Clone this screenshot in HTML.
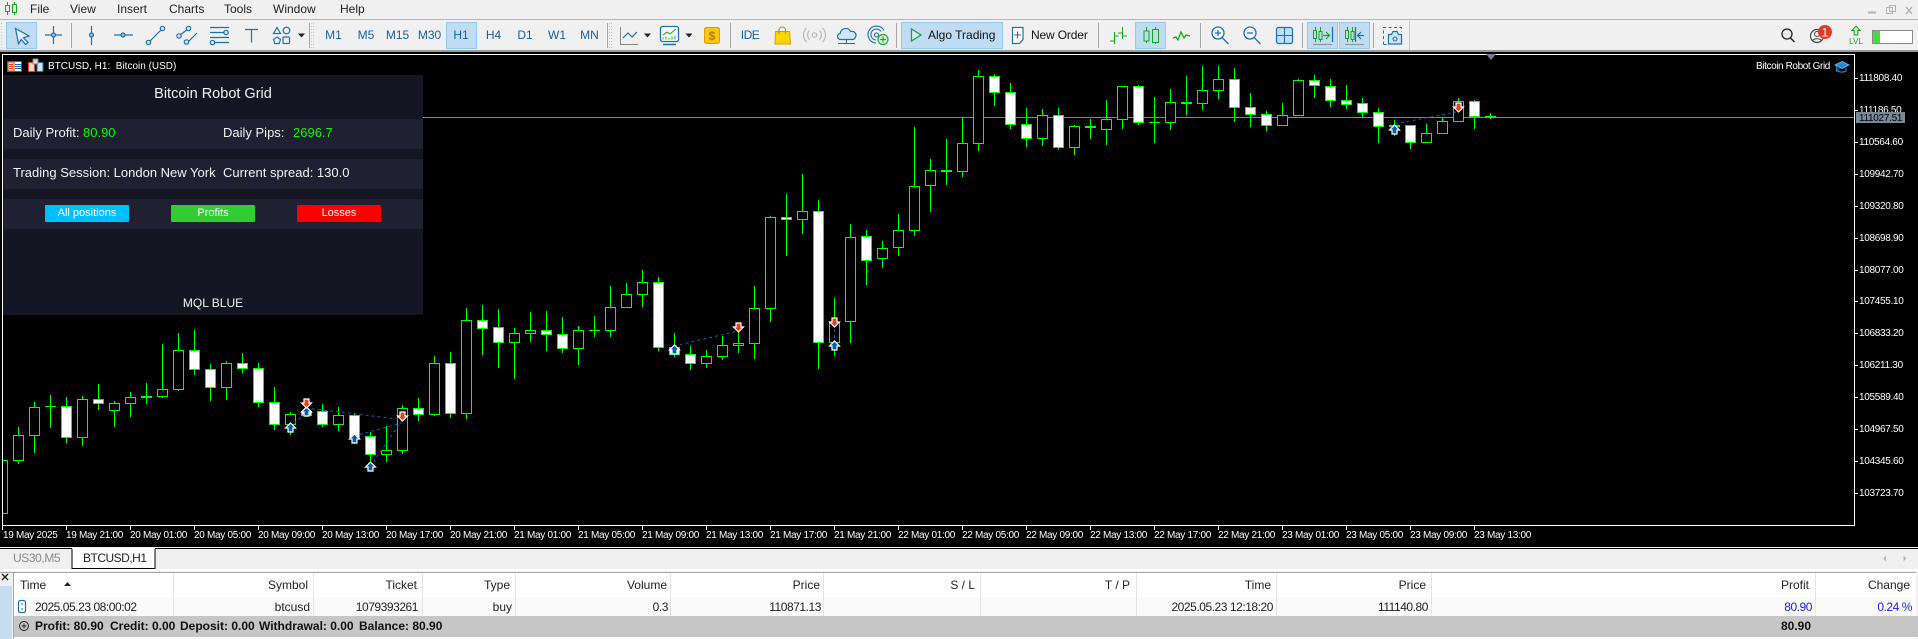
<!DOCTYPE html>
<html>
<head>
<meta charset="utf-8">
<style>
html,body{margin:0;padding:0;background:#f0f0f0}
#p{position:relative;width:1918px;height:639px;overflow:hidden;font-family:"Liberation Sans",sans-serif;background:#f0f0f0}
.a{position:absolute}
.t{position:absolute;white-space:pre;line-height:14px;height:14px;font-size:12px;color:#111}
.c{transform:translateX(-50%)}
.m{color:#222}
.f{color:#17609c}
.y{font-size:10px;letter-spacing:-.3px;color:#fff}
.x{font-size:10px;letter-spacing:-.3px;color:#fff;top:529px}
.h{color:#222;top:578px}
.d{color:#222;top:600px;letter-spacing:-.45px}
.s{font-weight:bold;color:#111;top:619px}
.w{color:#f2f2f2;font-size:13px}
.b{text-align:center;font-size:11px;color:#fff;line-height:17px;height:17px;top:205px;width:84px;border-radius:1px}
svg{position:absolute;left:0;top:0}
</style>
</head>
<body>
<div id="p">
<div class="a" style="left:0;top:19px;width:1918px;height:1px;background:#b4b4b4"></div>
<div class="a" style="left:0;top:50px;width:1918px;height:2px;background:#9a9a9a"></div>
<div class="a" style="left:0;top:52px;width:1918px;height:495px;background:#000"></div>
<div class="a" style="left:6px;top:22px;width:29px;height:25px;background:#c0dcf3;border:1px solid #90c8f6"></div>
<div class="a" style="left:446px;top:22px;width:29px;height:25px;background:#c0dcf3;border:1px solid #90c8f6"></div>
<div class="a" style="left:901px;top:22px;width:100px;height:25px;background:#c0dcf3;border:1px solid #90c8f6"></div>
<div class="a" style="left:1135px;top:22px;width:29px;height:25px;background:#c0dcf3;border:1px solid #90c8f6"></div>
<div class="a" style="left:1307px;top:22px;width:29px;height:25px;background:#c0dcf3;border:1px solid #90c8f6"></div>
<div class="a" style="left:1339px;top:22px;width:29px;height:25px;background:#c0dcf3;border:1px solid #90c8f6"></div>

<div class="t m" style="left:30px;top:2px">File</div>
<div class="t m" style="left:70px;top:2px">View</div>
<div class="t m" style="left:117px;top:2px">Insert</div>
<div class="t m" style="left:169px;top:2px">Charts</div>
<div class="t m" style="left:224px;top:2px">Tools</div>
<div class="t m" style="left:273px;top:2px">Window</div>
<div class="t m" style="left:340px;top:2px">Help</div>

<div class="t f c" style="left:333.5px;top:28px">M1</div>
<div class="t f c" style="left:366px;top:28px">M5</div>
<div class="t f c" style="left:397.5px;top:28px">M15</div>
<div class="t f c" style="left:429.5px;top:28px">M30</div>
<div class="t f c" style="left:461px;top:28px">H1</div>
<div class="t f c" style="left:493.5px;top:28px">H4</div>
<div class="t f c" style="left:525px;top:28px">D1</div>
<div class="t f c" style="left:557px;top:28px">W1</div>
<div class="t f c" style="left:589.5px;top:28px">MN</div>
<div class="t f c" style="left:750px;top:28px;letter-spacing:-.5px">IDE</div>
<div class="t" style="left:928px;top:28px">Algo Trading</div>
<div class="t" style="left:1031px;top:28px;letter-spacing:-.15px">New Order</div>

<svg width="1918" height="639" viewBox="0 0 1918 639" fill="none">
<!-- app icon -->
<g stroke="#19a51e"><path d="M7.5 2v13M14.5 2v13"/><rect x="5.5" y="5.5" width="4" height="6" fill="#f0f0f0"/><rect x="12.5" y="4.5" width="4" height="8" fill="#f0f0f0"/></g>
<!-- separators -->
<g stroke="#a6a6a6" shape-rendering="crispEdges"><path d="M71.5 23v25M730.5 23v25M896.5 23v25M1098.5 23v25M1200.5 23v25M1302.5 23v25M1373.5 23v25M607.5 23v25M309.5 23v25"/></g>
<path d="M1409.5 21v29" stroke="#c8c8c8" shape-rendering="crispEdges"/>
<g stroke="#c4c4c4" stroke-dasharray="1 2"><path d="M1.5 23v25M311.5 23v25M313.5 23v25M609.5 23v25M611.5 23v25"/></g>
<!-- tools -->
<g stroke="#1f70ad" stroke-width="1.2" fill="none">
<path d="M15.5 28.5L29 36l-5.5 1.8L28 42.5l-2.4 2-4.3-5-2.8 4.3z" fill="#e2eef8"/>
<path d="M53.5 26v18M45 35h17"/><circle cx="53.5" cy="35" r="2" fill="#8fc4ea"/>
<path d="M91.5 26v19"/><circle cx="91.5" cy="35" r="2" fill="#8fc4ea"/>
<path d="M114 35h19"/><circle cx="123" cy="35" r="2" fill="#8fc4ea"/>
<path d="M150 41l11-11"/><circle cx="148.5" cy="42.5" r="2.2" fill="#cfe4f5"/><circle cx="162.5" cy="28.5" r="2.2" fill="#cfe4f5"/>
<path d="M180 35l8-6M188 42l9-9"/><circle cx="179" cy="36" r="2.2" fill="#cfe4f5"/><circle cx="188.5" cy="28.5" r="2.2" fill="#cfe4f5"/><circle cx="186.5" cy="42" r="2.2" fill="#cfe4f5"/>
<path d="M210 27.5h19M210 32.5h14M210 37.5h19M215 42.5h14"/><circle cx="226" cy="32.5" r="2.2" fill="#cfe4f5"/><circle cx="212.5" cy="42.5" r="2.2" fill="#cfe4f5"/>
<path d="M245 29.5h13M251.5 29.5v13"/>
<path d="M277 27.5l3.5 6h-7z"/><circle cx="286.5" cy="30.5" r="3.3"/><path d="M277 37l3.5 2.5-1.3 4h-4.4l-1.3-4z"/><rect x="283" y="37" width="6.5" height="6.5" rx="1"/>
</g>
<path d="M298 33.5h7l-3.5 4z" fill="#222"/>
<!-- chart shift icon -->
<path d="M620.5 27v17.5H638" stroke="#888" stroke-width="1"/>
<path d="M623 38l5-5 4 4 5-5" stroke="#1f70ad" stroke-width="1.2"/>
<path d="M644 33.5h7l-3.5 4z" fill="#222"/>
<!-- template -->
<rect x="660.5" y="26.5" width="18" height="15" rx="2" stroke="#1f70ad" stroke-width="1.3" fill="#fff"/>
<path d="M663 44.5h13" stroke="#1f70ad" stroke-width="1.5"/>
<path d="M663 35l4-3 3 2 6-5" stroke="#25a53a" stroke-width="1.1"/>
<path d="M663 39.5v-2M666 39.5v-3M669 39.5v-2M672 39.5v-3M675 39.5v-4" stroke="#25a53a"/>
<path d="M685.5 33.5h7l-3.5 4z" fill="#222"/>
<!-- dollar -->
<rect x="704.5" y="27.5" width="15" height="16" rx="2" fill="#fbc512" stroke="#d39f10"/>
<text x="712" y="40" font-family="Liberation Sans" font-size="12" font-weight="bold" fill="#b07d10" text-anchor="middle">$</text>
<!-- bag -->
<path d="M775.5 31.5h14l1 12.5h-15.500z" fill="#ffd400" stroke="#d49f10"/>
<path d="M779 34v-4c0-4 6.500-4 6.500 0v4" stroke="#c08a10" stroke-width="1.1"/>
<!-- signal -->
<g stroke="#b8b8b8" stroke-width="1.2"><circle cx="814.500" cy="35" r="2.200"/><path d="M809.500 30.500c-2.500 2.500-2.500 6.500 0 9M819.500 30.500c2.500 2.500 2.500 6.500 0 9M806.500 28c-4 4-4 10 0 14M822.500 28c4 4 4 10 0 14"/></g>
<!-- cloud -->
<path d="M841 39.500c-4.500 0-4.500-5.500-.8-6 .6-5.500 8-7 10.300-2 4.500-1 6.500 3 5 5.500-.5 1.500-1.500 2.500-3 2.500z" fill="#cfe6f8" stroke="#1f70ad" stroke-width="1.2"/>
<path d="M846.500 39.500v3.500M838 43.500h17" stroke="#1f70ad" stroke-width="1.1"/>
<!-- globe plus -->
<g stroke="#1f70ad" stroke-width="1.1"><path d="M884 30.500a8.500 8.500 0 1 0-8 12.500"/><path d="M881 31.500a5.500 5.500 0 1 0-5 8.500"/><circle cx="876.500" cy="35" r="2"/></g>
<circle cx="883" cy="39.500" r="5" fill="#d8f3dc" stroke="#22a63a" stroke-width="1.200"/><path d="M883 36.500v6M880 39.500h6" stroke="#22a63a" stroke-width="1.200"/>
<!-- play -->
<path d="M911.500 29l9.500 6-9.500 6z" stroke="#1d9a45" stroke-width="1.300" fill="#d6ecf4"/>
<!-- new order -->
<path d="M1012.500 27.500h10.500v12l-3.500 4h-7z" fill="#fff" stroke="#1f70ad" stroke-width="1.200"/>
<path d="M1017.500 31.500v7M1014 35h7" stroke="#1f70ad" stroke-width="1.100"/>
<!-- chart types -->
<g stroke="#13a81c" stroke-width="1.200" shape-rendering="crispEdges">
<path d="M1114.500 32v12M1110 41h4.500M1114.500 36h4M1122.500 27v12M1118 33h4.500M1122.500 36h4.500"/>
<path d="M1146.500 27v16M1155.500 27v17"/>
<rect x="1144" y="31" width="5" height="10" fill="#c0dcf3"/><rect x="1152.500" y="29.500" width="6" height="13" fill="#c0dcf3"/>
</g>
<path d="M1173 38l3-1 2 3 3-8 3 6 2-3 4 1" stroke="#13a81c" stroke-width="1.300"/>
<!-- zoom -->
<g stroke="#1f70ad" stroke-width="1.300"><circle cx="1218" cy="33" r="6"/><path d="M1222.500 38l6 6M1215 33h6M1218 30v6"/><circle cx="1250" cy="33" r="6"/><path d="M1254.500 38l6 6M1247 33h6"/></g>
<rect x="1276.500" y="27.500" width="16" height="16" rx="2" fill="#bfe0fa" stroke="#1f70ad" stroke-width="1.200"/>
<path d="M1284.500 28v15M1277 35.500h15" stroke="#1f70ad" stroke-width="1.100"/>
<!-- autoscroll -->
<g stroke="#13a81c" shape-rendering="crispEdges"><path d="M1315.500 27v15M1320.500 27v15M1347.500 27v15M1352.500 27v15"/><rect x="1313.500" y="30.500" width="3" height="8" fill="#c0dcf3"/><rect x="1319" y="31.500" width="3" height="8" fill="#c0dcf3"/>
<rect x="1345.500" y="30.500" width="3" height="8" fill="#c0dcf3"/><rect x="1351" y="31.500" width="3" height="8" fill="#c0dcf3"/></g>
<path d="M1323 35.500h6M1326 32l3.500 3.500-3.500 3.500" stroke="#13a81c" stroke-width="1.200"/>
<path d="M1332.500 27v15" stroke="#1f70ad" stroke-width="1.300"/>
<path d="M1355.500 27v15" stroke="#1f70ad" stroke-width="1.300"/>
<path d="M1364 35.500h-6M1361 32l-3.500 3.500 3.500 3.500" stroke="#1f70ad" stroke-width="1.200"/>
<path d="M1313 44.500h19M1345 44.500h19" stroke="#8e9aa5" stroke-width="1.200"/>
<!-- camera -->
<path d="M1383.500 44.500v-17h18v4M1383.500 44.500h4" stroke="#1f70ad" stroke-dasharray="3 2.500"/>
<path d="M1388.500 34.500h3l1.500-3h4l1.500 3h3v9.500h-13z" fill="#cfe6f8" stroke="#1f70ad" stroke-width="1.200"/>
<circle cx="1395" cy="39" r="2" stroke="#1f70ad"/>
<!-- search etc -->
<circle cx="1787" cy="34" r="5" stroke="#222" stroke-width="1.300"/><path d="M1790.500 38l4 4" stroke="#222" stroke-width="1.500"/>
<circle cx="1817" cy="36" r="6.500" stroke="#444" stroke-width="1.200"/>
<circle cx="1817" cy="34" r="2.500" stroke="#444"/><path d="M1812.500 41c1-3 8-3 9 0" stroke="#444"/>
<circle cx="1825" cy="32" r="7" fill="#e23b26"/>
<text x="1825" y="36.500" font-family="Liberation Sans" font-size="12" fill="#fff" text-anchor="middle">1</text>
<path d="M1856 26l4 4.500h-2.200v4.500h-3.600v-4.500H1852z" stroke="#13a81c" fill="#d9f3da"/>
<text x="1856" y="44" font-family="Liberation Sans" font-size="8" fill="#13a81c" text-anchor="middle">LVL</text>
<rect x="1872.500" y="30.500" width="40" height="13" fill="#fff" stroke="#8a8a8a"/>
<rect x="1873" y="31" width="7" height="12" fill="#47d93f"/>
<!-- window btns -->
<path d="M1868 12.500h8" stroke="#b4b4b4" stroke-width="2"/>
<rect x="1886.500" y="7.500" width="6" height="6" stroke="#b4b4b4"/><rect x="1889.500" y="5.500" width="6" height="6" stroke="#b4b4b4"/>
<path d="M1906 7l6 7M1912 7l-6 7" stroke="#b4b4b4" stroke-width="1.500"/>

<!-- chart -->
<rect x="0" y="52" width="1918" height="495" fill="#000"/>
<path d="M3 117.500H1854" stroke="#778899" shape-rendering="crispEdges"/>
<g shape-rendering="crispEdges">
<path stroke="#0f0" d="M18.500 427V464M34.500 402V453M50.500 395V428M66.500 397V443M82.500 396V446M98.500 384V410M114.500 401V427M130.500 392V417M146.500 383V404M162.500 344V398M178.500 333V391M194.500 330V375M210.500 364V401M226.500 361V400M242.500 353V373M258.500 363V407M274.500 387V430M290.500 412V435M306.500 408V417M322.500 404V427M338.500 407V431M354.500 413V444M370.500 432V461M386.500 426V462M402.500 405V454M418.500 398V421M434.500 356V416M450.500 352V418M466.500 308V419M482.500 305V355M498.500 309V368M514.500 328V379M530.500 312V342M546.500 311V351M562.500 317V353M578.500 326V365M594.500 316V337M610.500 286V337M626.500 283V308M642.500 270V307M658.500 277V351M674.500 333V357M690.500 346V370M706.500 350V368M722.500 336V360M738.500 330V353M754.500 286V359M770.500 216V322M786.500 194V256M802.500 174V234M818.500 200V369M834.500 298V356M850.500 224V343M866.500 230V285M882.500 241V268M898.500 214V256M914.500 127V236M930.500 159V212M946.500 139V185M962.500 118V177M978.500 70V151M994.500 74V106M1010.500 83V129M1026.500 108V147M1042.500 109V146M1058.500 108V150M1074.500 125V155M1090.500 119V139M1106.500 100V145M1122.500 86V129M1138.500 85V125M1154.500 97V143M1170.500 89V130M1186.500 76V115M1202.500 66V110M1218.500 66V99M1234.500 68V122M1250.500 93V127M1266.500 111V131M1282.500 103V126M1298.500 79V116M1314.500 75V98M1330.500 79V107M1346.500 85V109M1362.500 98V118M1378.500 108V143M1394.500 120V136M1410.500 125V149M1426.500 124V143M1442.500 117V134M1458.500 98V122M1474.500 100V129M1490.500 113V119"/>
<path stroke="#0f0" fill="#000" d="M-2.500 460.500h10v53h-10zM13.500 435.500h10v25h-10zM29.500 407.500h10v28h-10zM77.500 399.500h10v38h-10zM109.500 403.500h10v7h-10zM125.500 397.500h10v6h-10zM157.500 389.500h10v7h-10zM173.500 350.500h10v39h-10zM221.500 363.500h10v24h-10zM285.500 414.500h10v10h-10zM333.500 415.500h10v9h-10zM381.500 450.500h10v4h-10zM397.500 408.500h10v42h-10zM429.500 363.500h10v51h-10zM461.500 320.500h10v93h-10zM509.500 333.500h10v9h-10zM525.500 330.500h10v3h-10zM573.500 330.500h10v18h-10zM605.500 307.500h10v23h-10zM621.500 294.500h10v13h-10zM637.500 282.500h10v12h-10zM701.500 356.500h10v7h-10zM717.500 345.500h10v11h-10zM733.500 343.500h10v2h-10zM749.500 308.500h10v35h-10zM765.500 217.500h10v91h-10zM797.500 211.500h10v8h-10zM829.500 322.500h10v20h-10zM845.500 237.500h10v84h-10zM877.500 248.500h10v10h-10zM893.500 230.500h10v17h-10zM909.500 186.500h10v44h-10zM925.500 170.500h10v15h-10zM957.500 143.500h10v28h-10zM973.500 76.500h10v67h-10zM1037.500 115.500h10v23h-10zM1069.500 126.500h10v21h-10zM1101.500 119.500h10v10h-10zM1117.500 86.500h10v33h-10zM1165.500 102.500h10v20h-10zM1197.500 90.500h10v13h-10zM1213.500 79.500h10v11h-10zM1277.500 115.500h10v10h-10zM1293.500 80.500h10v35h-10zM1421.500 133.500h10v9h-10zM1437.500 121.500h10v12h-10zM1453.500 101.500h10v20h-10z"/>
<path stroke="#0f0" fill="#fff" d="M61.500 406.500h10v31h-10zM93.500 399.500h10v4h-10zM189.500 350.500h10v19h-10zM205.500 369.500h10v18h-10zM237.500 363.500h10v5h-10zM253.500 368.500h10v34h-10zM269.500 402.500h10v22h-10zM301.500 411.500h10v4h-10zM317.500 411.500h10v13h-10zM349.500 415.500h10v22h-10zM365.500 436.500h10v18h-10zM413.500 408.500h10v6h-10zM445.500 363.500h10v50h-10zM477.500 320.500h10v8h-10zM493.500 327.500h10v15h-10zM541.500 330.500h10v4h-10zM557.500 334.500h10v14h-10zM653.500 282.500h10v65h-10zM669.500 347.500h10v7h-10zM685.500 354.500h10v9h-10zM781.500 217.500h10v2h-10zM813.500 211.500h10v131h-10zM861.500 236.500h10v24h-10zM989.500 76.500h10v16h-10zM1005.500 92.500h10v32h-10zM1021.500 124.500h10v14h-10zM1053.500 115.500h10v32h-10zM1133.500 86.500h10v36h-10zM1229.500 79.500h10v28h-10zM1245.500 107.500h10v7h-10zM1261.500 114.500h10v11h-10zM1309.500 80.500h10v5h-10zM1325.500 86.500h10v14h-10zM1341.500 100.500h10v4h-10zM1357.500 103.500h10v9h-10zM1373.500 112.500h10v14h-10zM1405.500 125.500h10v17h-10zM1469.500 101.500h10v15h-10z"/>
<path stroke="#0f0" d="M45 406.500h11M589 330.500h11M1149 122.500h11"/>
<path fill="#0f0" d="M141 396h11v2h-11zM941 170h11v2h-11zM1085 126h11v2h-11zM1181 102h11v2h-11zM1389 125h11v2h-11zM1485 116h11v2h-11z"/>
<rect x="0" y="52" width="2" height="473" fill="#000"/>
<path stroke="#fff" d="M2.500 54v471.500H1854.500V54M2 54.500H1855"/>
<path stroke="#fff" d="M2.500 525v5M66.500 525v5M130.500 525v5M194.500 525v5M258.500 525v5M322.500 525v5M386.500 525v5M450.500 525v5M514.500 525v5M578.500 525v5M642.500 525v5M706.500 525v5M770.500 525v5M834.500 525v5M898.500 525v5M962.500 525v5M1026.500 525v5M1090.500 525v5M1154.500 525v5M1218.500 525v5M1282.500 525v5M1346.500 525v5M1410.500 525v5M1474.500 525v5"/>
<path stroke="#fff" d="M1854 78.500h4M1854 110.500h4M1854 142.500h4M1854 174.500h4M1854 206.500h4M1854 238.500h4M1854 270.500h4M1854 301.500h4M1854 333.500h4M1854 365.500h4M1854 397.500h4M1854 429.500h4M1854 461.500h4M1854 493.500h4"/>
</g>
<path d="M1486 54h10l-5 6z" fill="#708090"/>
<!-- dashed trade lines -->
<g stroke="#0c5fb0" stroke-dasharray="3 3" stroke-width="1">
<path d="M306 408L398 419M290 428L306 412M354 436L402 423M370 467L402 420M674 346L738 331M834.500 323V343M1395 124L1456 112"/>
</g>
<!-- markers -->
<g stroke="#fff" stroke-width="1.200" stroke-linejoin="miter">
<g fill="#0b5ea8">
<path d="M290.500 423l5 5h-2.500v4h-5v-4h-2.500z"/>
<path d="M306.500 407l5 5h-2.500v4h-5v-4h-2.500z"/>
<path d="M354.500 434l5 5h-2.500v4h-5v-4h-2.500z"/>
<path d="M370.500 462l5 5h-2.500v4h-5v-4h-2.500z"/>
<path d="M674.500 345l5 5h-2.500v4h-5v-4h-2.500z"/>
<path d="M834.500 341l5 5h-2.500v4h-5v-4h-2.500z"/>
<path d="M1394.500 125l5 5h-2.500v4h-5v-4h-2.500z"/>
</g>
<g fill="#e2421f">
<path d="M306.500 408l5-5h-2.500v-4h-5v4h-2.500z"/>
<path d="M402.500 421l5-5h-2.500v-4h-5v4h-2.500z"/>
<path d="M738.500 332l5-5h-2.500v-4h-5v4h-2.500z"/>
<path d="M834.500 327l5-5h-2.500v-4h-5v4h-2.500z"/>
<path d="M1458.500 112l5-5h-2.500v-4h-5v4h-2.500z"/>
</g>
</g>
<!-- title icons -->
<rect x="7.500" y="61.500" width="14" height="10" fill="#fff" stroke="#1b6fb0"/>
<path d="M8 62h6v9H8z" fill="#fbe3de" stroke="#e2421f" stroke-width="1"/>
<path d="M9 64.500h4M9 66.500h4M9 68.500h4" stroke="#e2421f"/><path d="M15 64.500h6M15 66.500h6M15 68.500h6" stroke="#1b6fb0"/>
<rect x="28.500" y="62.500" width="6" height="9" fill="#fbd7cf" stroke="#e2421f"/>
<rect x="37" y="62.500" width="6" height="9" fill="#cfe6f8" stroke="#1b6fb0"/>
<rect x="33" y="59" width="5" height="5" fill="#ddd" stroke="#888"/>
<!-- cap icon -->
<path d="M1835 65l7-3.500 7 3.500-7 3.500z" fill="#1e88d8" stroke="#7cc4f4" stroke-width=".8"/>
<path d="M1838 68v3c2 1.500 6 1.500 8 0v-3" stroke="#1e88d8" stroke-width="1.200"/>
<path d="M1836.500 66v6" stroke="#1e88d8"/>
<!-- table -->
<rect x="0" y="548" width="72" height="1" fill="#000"/>
<rect x="155" y="548" width="1763" height="1" fill="#000"/>
<rect x="0" y="549" width="1918" height="90" fill="#f0f0f0"/>
<rect x="0" y="569" width="1918" height="2" fill="#fff"/>
<rect x="0" y="572" width="1916" height="1" fill="#a8a8a8"/>
<rect x="0" y="586" width="12" height="53" fill="#c6dcef"/>
<rect x="13" y="573" width="1903" height="66" fill="#fff"/>
<rect x="13" y="597" width="1903" height="19" fill="#fafafa"/>
<rect x="13" y="616" width="1905" height="21" fill="#c6c6c6"/>
<rect x="13" y="573" width="1" height="66" fill="#a8a8a8"/>
<path stroke="#e4e4e4" shape-rendering="crispEdges" d="M173.500 573v43M313.500 573v43M422.500 573v43M515.500 573v43M670.500 573v43M823.500 573v43M980.500 573v43M1136.500 573v43M1276.500 573v43M1431.500 573v43M1815.500 573v43"/>
<path d="M64 586l3.500-4 3.500 4z" fill="#222"/>
<path d="M2 574l6 6M8 574l-6 6" stroke="#222" stroke-width="1.400"/>
<rect x="18.500" y="600.500" width="7" height="12" rx="2" stroke="#1b6fb0" fill="#fff" stroke-width="1.200"/>
<path d="M22 603v2M22 608v2" stroke="#1b6fb0"/>
<circle cx="24" cy="626" r="4.500" stroke="#222"/><path d="M21.500 626h5M24 623.500v5" stroke="#222"/>
<path d="M1886 555.500l-3 3 3 3zM1903.500 555.500l3 3-3 3z" fill="#b8b8b8"/>
<rect x="72" y="548" width="83" height="20" fill="#fff"/>
<path d="M72 549v19.500h83V549" stroke="#000" stroke-width="1"/>
</svg>

<div class="t" style="left:48px;top:60px;font-size:10px;color:#fff">BTCUSD, H1:  Bitcoin (USD)</div>
<div class="t" style="left:1756px;top:60px;font-size:10px;letter-spacing:-.4px;color:#fff">Bitcoin Robot Grid</div>

<div class="a" style="left:3px;top:75px;width:420px;height:240px;background:#151524"></div>
<div class="a" style="left:3px;top:119px;width:420px;height:30px;background:#1f2133"></div>
<div class="a" style="left:3px;top:159px;width:420px;height:30px;background:#1f2133"></div>
<div class="a" style="left:3px;top:199px;width:420px;height:30px;background:#1f2133"></div>
<div class="t c" style="left:213px;top:87px;font-size:14.500px;color:#f2f2f2">Bitcoin Robot Grid</div>
<div class="t w" style="left:13px;top:126px">Daily Profit:</div>
<div class="t w" style="left:83px;top:126px;color:#0f0">80.90</div>
<div class="t w" style="left:223px;top:126px">Daily Pips:</div>
<div class="t w" style="left:293px;top:126px;color:#0f0">2696.7</div>
<div class="t w" style="left:13px;top:166px">Trading Session: London New York</div>
<div class="t w" style="left:223px;top:166px">Current spread: 130.0</div>
<div class="t b" style="left:45px;background:#00bfff">All positions</div>
<div class="t b" style="left:171px;background:#32cd32">Profits</div>
<div class="t b" style="left:297px;background:#f00">Losses</div>
<div class="t c" style="left:213px;top:296px;color:#f2f2f2">MQL BLUE</div>

<div class="t y" style="left:1859px;top:72px">111808.40</div>
<div class="t y" style="left:1859px;top:104px">111186.50</div>
<div class="t y" style="left:1859px;top:136px">110564.60</div>
<div class="t y" style="left:1859px;top:168px">109942.70</div>
<div class="t y" style="left:1859px;top:200px">109320.80</div>
<div class="t y" style="left:1859px;top:232px">108698.90</div>
<div class="t y" style="left:1859px;top:264px">108077.00</div>
<div class="t y" style="left:1859px;top:295px">107455.10</div>
<div class="t y" style="left:1859px;top:327px">106833.20</div>
<div class="t y" style="left:1859px;top:359px">106211.30</div>
<div class="t y" style="left:1859px;top:391px">105589.40</div>
<div class="t y" style="left:1859px;top:423px">104967.50</div>
<div class="t y" style="left:1859px;top:455px">104345.60</div>
<div class="t y" style="left:1859px;top:487px">103723.70</div>
<div class="a" style="left:1856px;top:112px;width:49px;height:11px;background:#778899"></div>
<div class="t y" style="left:1859px;top:112px;color:#000">111027.51</div>

<div class="t x" style="left:3px">19 May 2025</div>
<div class="t x" style="left:66px">19 May 21:00</div>
<div class="t x" style="left:130px">20 May 01:00</div>
<div class="t x" style="left:194px">20 May 05:00</div>
<div class="t x" style="left:258px">20 May 09:00</div>
<div class="t x" style="left:322px">20 May 13:00</div>
<div class="t x" style="left:386px">20 May 17:00</div>
<div class="t x" style="left:450px">20 May 21:00</div>
<div class="t x" style="left:514px">21 May 01:00</div>
<div class="t x" style="left:578px">21 May 05:00</div>
<div class="t x" style="left:642px">21 May 09:00</div>
<div class="t x" style="left:706px">21 May 13:00</div>
<div class="t x" style="left:770px">21 May 17:00</div>
<div class="t x" style="left:834px">21 May 21:00</div>
<div class="t x" style="left:898px">22 May 01:00</div>
<div class="t x" style="left:962px">22 May 05:00</div>
<div class="t x" style="left:1026px">22 May 09:00</div>
<div class="t x" style="left:1090px">22 May 13:00</div>
<div class="t x" style="left:1154px">22 May 17:00</div>
<div class="t x" style="left:1218px">22 May 21:00</div>
<div class="t x" style="left:1282px">23 May 01:00</div>
<div class="t x" style="left:1346px">23 May 05:00</div>
<div class="t x" style="left:1410px">23 May 09:00</div>
<div class="t x" style="left:1474px">23 May 13:00</div>

<div class="t" style="left:13px;top:551px;color:#8a8a8a;letter-spacing:-.4px">US30,M5</div>
<div class="t" style="left:83px;top:551px;color:#222;letter-spacing:-.5px">BTCUSD,H1</div>

<div class="t h" style="left:20px">Time</div>
<div class="t h" style="right:1610px">Symbol</div>
<div class="t h" style="right:1501px">Ticket</div>
<div class="t h" style="right:1408px">Type</div>
<div class="t h" style="right:1251px">Volume</div>
<div class="t h" style="right:1098px">Price</div>
<div class="t h" style="right:943px">S / L</div>
<div class="t h" style="right:788px">T / P</div>
<div class="t h" style="right:647px">Time</div>
<div class="t h" style="right:492px">Price</div>
<div class="t h" style="right:109px">Profit</div>
<div class="t h" style="right:8px">Change</div>

<div class="t d" style="left:35px">2025.05.23 08:00:02</div>
<div class="t d" style="right:1608px;letter-spacing:0">btcusd</div>
<div class="t d" style="right:1500px">1079393261</div>
<div class="t d" style="right:1406px;letter-spacing:0">buy</div>
<div class="t d" style="right:1250px">0.3</div>
<div class="t d" style="right:1097px">110871.13</div>
<div class="t d" style="right:645px">2025.05.23 12:18:20</div>
<div class="t d" style="right:490px">111140.80</div>
<div class="t d" style="right:106px;color:#1a1ae0">80.90</div>
<div class="t d" style="right:6px;color:#1a1ae0">0.24 %</div>

<div class="t s" style="left:35px">Profit: 80.90</div>
<div class="t s" style="left:110px">Credit: 0.00</div>
<div class="t s" style="left:180px">Deposit: 0.00</div>
<div class="t s" style="left:259px">Withdrawal: 0.00</div>
<div class="t s" style="left:359px">Balance: 80.90</div>
<div class="t s" style="right:107px">80.90</div>
</div>
</body>
</html>
